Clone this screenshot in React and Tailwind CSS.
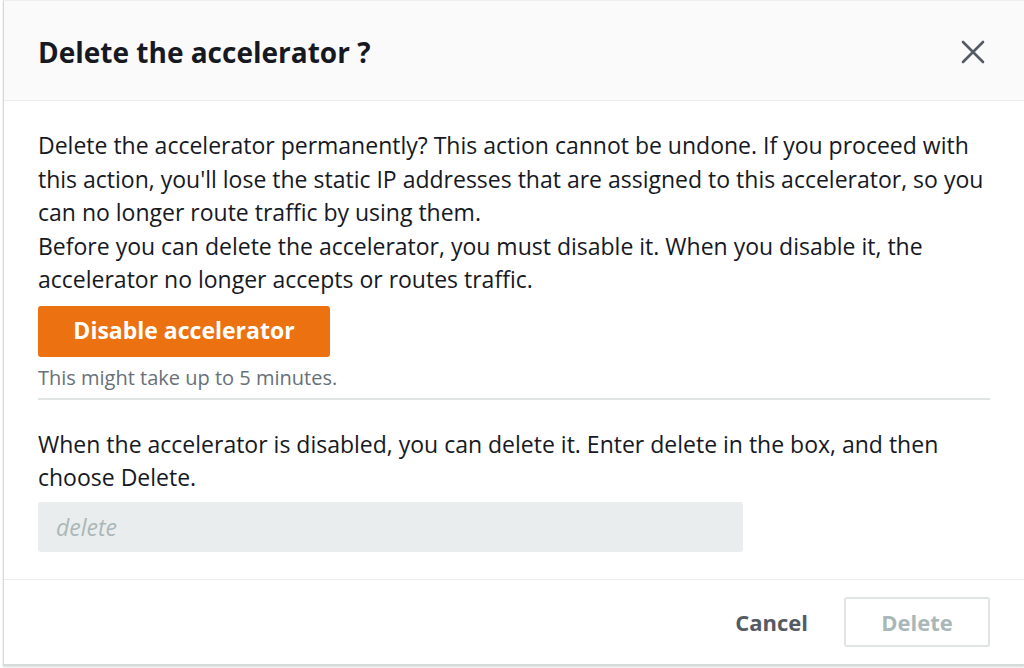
const DeleteAcceleratorModal = () => {
  return (
    <div className="w-[1024px] h-[668px] bg-white overflow-hidden" style={{ fontFamily: '"Open Sans", "Noto Sans", sans-serif' }}>
      <div className="ml-[3px] w-[1021px] h-[666px] flex flex-col bg-white border-l border-t border-b-2 border-[#d5dbdb] border-t-[#eef0f0] shadow-[0_1px_2px_rgba(0,0,0,0.15)]">
        <div className="h-[100px] shrink-0 flex items-center justify-between bg-[#fafafa] border-b border-[#eaeded] pl-[34px] pr-[39px] pt-[3px]">
          <h2 className="text-[28px] font-bold text-[#16191f]">Delete the accelerator ?</h2>
          <svg width="24" height="24" viewBox="0 0 24 24" className="text-[#545b64]">
            <path d="M2 2 L22 22 M22 2 L2 22" stroke="currentColor" strokeWidth="2.6" strokeLinecap="round" fill="none" />
          </svg>
        </div>

        <div className="flex-1 pl-[34px] pr-[34px] pt-[28px] text-[23px] leading-[33.5px] text-[#16191f]">
          <p className="whitespace-nowrap">
            Delete the accelerator permanently? This action cannot be undone. If you proceed with
            <br />
            this action, you'll lose the static IP addresses that are assigned to this accelerator, so you
            <br />
            can no longer route traffic by using them.
            <br />
            Before you can delete the accelerator, you must disable it. When you disable it, the
            <br />
            accelerator no longer accepts or routes traffic.
          </p>

          <button
            type="button"
            className="mt-[9px] w-[292px] h-[51px] rounded-[3px] bg-[#ec7211] text-white font-bold text-[23px]"
          >
            Disable accelerator
          </button>
          <p className="mt-[8px] text-[20px] leading-[26px] text-[#687078]">This might take up to 5 minutes.</p>

          <div className="mt-[7px] border-t-2 border-[#e1e4e4]" />

          <p className="mt-[28px] whitespace-nowrap">
            When the accelerator is disabled, you can delete it. Enter delete in the box, and then
            <br />
            choose Delete.
          </p>

          <input
            type="text"
            placeholder="delete"
            disabled
            className="mt-[7px] w-[705px] h-[50px] rounded-[3px] bg-[#eaeded] px-[18px] text-[23px] italic placeholder:text-[#aab7b8] outline-none"
          />
        </div>

        <div className="h-[85px] shrink-0 border-t border-[#eaeded] flex items-center justify-end gap-[36px] pr-[34px]">
          <button type="button" className="text-[22px] font-bold text-[#545b64]">Cancel</button>
          <button
            type="button"
            disabled
            className="w-[146px] h-[50px] rounded-[3px] border-2 border-[#e1e4e4] text-[22px] font-bold text-[#aab7b8]"
          >
            Delete
          </button>
        </div>
      </div>
    </div>
  );
};

export default DeleteAcceleratorModal;
